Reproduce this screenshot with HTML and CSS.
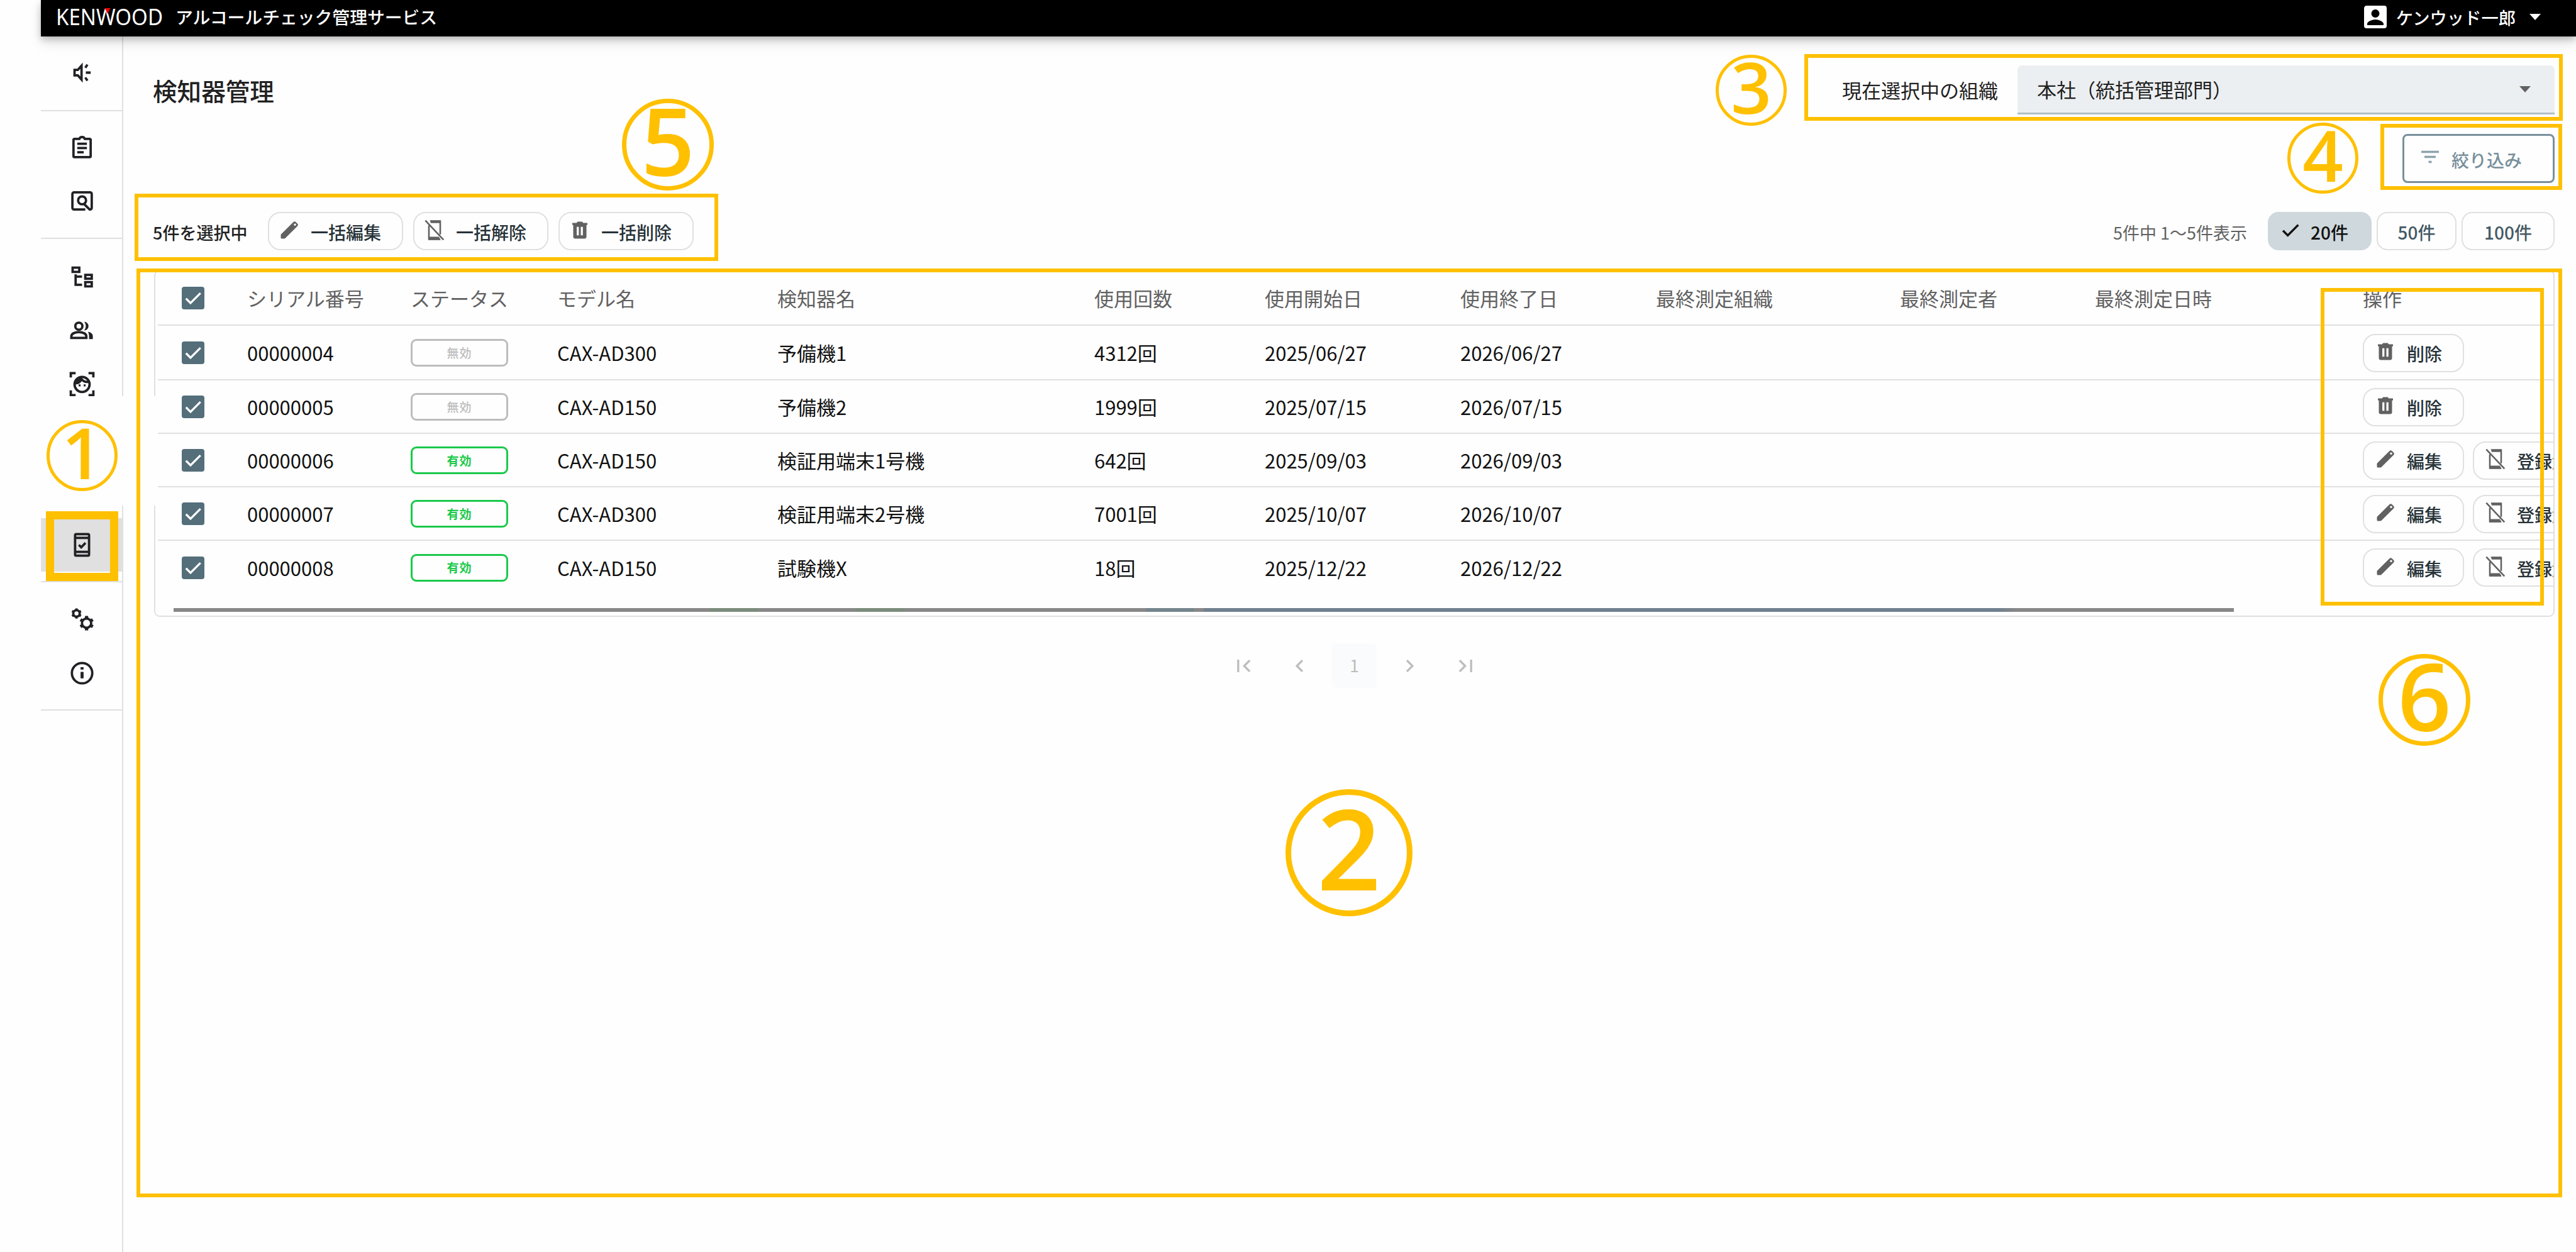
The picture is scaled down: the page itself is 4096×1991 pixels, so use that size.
FILE: index.html
```html
<!doctype html>
<html lang="ja">
<head>
<meta charset="utf-8">
<title>検知器管理</title>
<link rel="stylesheet" href="styles.css">
</head>

<body>
<svg class="defs">
	<symbol id="i-edit" viewBox="0 0 24 24"><path d="M20.700 5.200 18.800 3.300c-.7-.7-1.700-.7-2.400 0L3.300 16.400C3.100 16.600 3 16.900 3 17.200V20c0 .6.4 1 1 1h2.800c.3 0 .6-.1.800-.3L20.700 7.600c.7-.7.700-1.700 0-2.400zM18 7.400a1.200 1.200 0 1 1 0-2.400 1.200 1.200 0 0 1 0 2.400z"/></symbol>
	<symbol id="i-off" viewBox="0 0 24 24"><path d="M2.200 1.800 21.500 22.300M6 7v14.500h11.800M8 2.700h10V16.500" fill="none" stroke="currentColor" stroke-width="1.700"/><path d="M7 1.500h11.500v3H8zM5.500 19h11l2 3.500h-13z"/></symbol>
	<symbol id="i-del" viewBox="0 0 24 24"><path d="M4 4.300V6.500h1V19c0 1.200.8 2 2 2h10c1.200 0 2-.8 2-2V6.500h1V4.300h-4.500L14.500 3h-5L8.500 4.300zM8.700 8.500h2.200v9H8.700zM13 8.500h2.200v9H13z" fill-rule="evenodd"/></symbol>
	<symbol id="i-check" viewBox="0 0 24 24"><path d="M4.500 12.500 9.300 17.300 19.800 6.700" fill="none" stroke="currentColor" stroke-width="2.200"/></symbol>
</svg>

<div class="app">
	<header class="header">
		<svg class="logo" viewBox="0 0 170 30"><text x="0" y="27.500" textLength="170" lengthAdjust="spacingAndGlyphs">KENWOOD</text><path d="M77.500 1h9l-4.500 9z"/></svg>
		<span class="service">アルコールチェック管理サービス</span>
		<div class="user">
			<svg class="avatar" viewBox="0 0 24 24"><path fill-rule="evenodd" d="M5 3h14a2 2 0 0 1 2 2v14a2 2 0 0 1-2 2H5a2 2 0 0 1-2-2V5c0-1.100.9-2 2-2zM12 6a3.200 3.200 0 1 0 0 6.500A3.200 3.200 0 0 0 12 6zM5.500 18.500h13v-1c0-2-4.300-3.500-6.500-3.500s-6.500 1.500-6.500 3.500z"/></svg>
			<span>ケンウッド一郎</span>
			<i class="caret"></i>
		</div>
	</header>

	<div class="body">
		<nav class="side">
			<div class="group g1">
				<a class="item"><svg viewBox="0 0 24 24"><path d="M5 9.500h3l3.500-4v13L8 14.500H5z"/><path d="M15 7.500 17 4.500M15.500 12h4.500M15 16.500l2 3"/></svg></a>
			</div>
			<div class="group g2">
				<a class="item"><svg viewBox="0 0 24 24"><path d="M5 4h4.500c.3-1 1.300-1.800 2.500-1.800s2.200.8 2.500 1.800H19a1 1 0 0 1 1 1v15a1 1 0 0 1-1 1H5a1 1 0 0 1-1-1V5a1 1 0 0 1 1-1zM7.500 8.500h9M7.500 12.500h9M7.500 16.500h6"/></svg></a>
				<a class="item"><svg viewBox="0 0 24 24"><path d="M15 20H4.500a1.500 1.500 0 0 1-1.500-1.500v-13A1.500 1.500 0 0 1 4.500 4h15A1.500 1.500 0 0 1 21 5.500v13a1.500 1.500 0 0 1-1.500 1.500h-.5l-5-5"/><circle cx="12" cy="11.500" r="3.700"/></svg></a>
			</div>
			<div class="group g3">
				<a class="item"><svg viewBox="0 0 24 24"><path d="M3.200 3.300h6.200v4H3.200zM15 10h6v3.500h-6zM15 16.700h6v4h-6zM6 9.500v9.800h6M6 11.700h6"/></svg></a>
				<a class="item"><svg viewBox="0 0 24 24"><circle cx="9" cy="8" r="3.300"/><path d="M2 19v-1.500c0-2.300 3-4 7-4s7 1.700 7 4V19z"/><path class="fill" d="M14 4a4 4 0 1 1 0 8c2-2.500 2-5.500 0-8zM17.500 13.200c3 .6 4.500 2.200 4.500 4V20h-3.500v-2.500c0-1.700-.3-3-1-4.300z"/></svg></a>
				<a class="item"><svg viewBox="0 0 24 24"><circle cx="12" cy="12.500" r="7"/><path d="M5.500 11.500c3 0 5-1.500 6-4 1.500 2 4 3 7 2.500M1.500 6V2H6M18 2h4.500v4M1.500 18v4.500H6M18 22.500h4.500V18"/><path class="fill" d="M8.800 12.500h1.800v1.800H8.800zM13.500 12.500h1.800v1.800h-1.800zM6 9l5-3 1 2-5 3z"/></svg></a>
			</div>
			<div class="group g4">
				<a class="item on"><svg viewBox="0 0 24 24"><path d="M6.500 2h11a1 1 0 0 1 1 1v18a1 1 0 0 1-1 1h-11a1 1 0 0 1-1-1V3a1 1 0 0 1 1-1zM6 5.500h12M6 18.500h12M9 12l2.200 2.200 4-4"/></svg></a>
			</div>
			<div class="group g5">
				<a class="item"><svg viewBox="0 0 24 24"><circle cx="6.800" cy="6.200" r="3"/><path d="M6.800 1.500v2M6.800 9v2M2.700 3.900l1.700 1M9.200 7.500l1.700 1M2.700 8.500l1.700-1M9.200 4.900l1.700-1"/><circle cx="16.200" cy="15.200" r="4.300"/><path d="M16.200 8.500V11M16.200 19.500V22M10.500 11.900l2 1.200M20 17.300l2 1.200M10.500 18.500l2-1.200M20 13.100l2-1.200" stroke-width="3"/></svg></a>
				<a class="item"><svg viewBox="0 0 24 24"><circle cx="12" cy="12" r="9.500"/><path d="M12 10.800v6M12 6.500v2.200" stroke-width="2.800"/></svg></a>
			</div>
		</nav>

		<main class="main">
			<div class="top">
				<h1>検知器管理</h1>
				<div class="org">
					<label>現在選択中の組織</label>
					<div class="select"><span>本社（統括管理部門）</span><i class="caret"></i></div>
				</div>
			</div>
			<div class="filter">
				<button><svg viewBox="0 0 30 22"><path d="M1 2.500h28M6 10.500h18M12.500 18.500h5"/></svg>絞り込み</button>
			</div>
			<div class="tools">
				<div class="bulk">
					<span>5件を選択中</span>
					<a class="btn"><svg><use href="#i-edit"/></svg>一括編集</a>
					<a class="btn"><svg><use href="#i-off"/></svg>一括解除</a>
					<a class="btn"><svg><use href="#i-del"/></svg>一括削除</a>
				</div>
				<div class="size">
					<span>5件中 1～5件表示</span>
					<a class="chip s20 on"><svg><use href="#i-check"/></svg>20件</a>
					<a class="chip s50">50件</a>
					<a class="chip s100">100件</a>
				</div>
			</div>

			<div class="tablebox">
				<table>
					<colgroup><col class="c0"><col class="c1"><col class="c2"><col class="c3"><col class="c4"><col class="c5"><col class="c6"><col class="c7"><col class="c8"><col class="c9"><col class="c10"><col class="c11"></colgroup>
					<thead>
						<tr><th><i class="cb"><svg><use href="#i-check"/></svg></i></th><th>シリアル番号</th><th>ステータス</th><th>モデル名</th><th>検知器名</th><th>使用回数</th><th>使用開始日</th><th>使用終了日</th><th>最終測定組織</th><th>最終測定者</th><th>最終測定日時</th><th>操作</th></tr>
					</thead>
					<tbody>
						<tr><td><i class="cb"><svg><use href="#i-check"/></svg></i></td><td>00000004</td><td><em class="tag">無効</em></td><td>CAX-AD300</td><td>予備機1</td><td>4312回</td><td>2025/06/27</td><td>2026/06/27</td><td></td><td></td><td></td><td><div class="ops"><a class="btn"><svg><use href="#i-del"/></svg>削除</a></div></td></tr>
						<tr><td><i class="cb"><svg><use href="#i-check"/></svg></i></td><td>00000005</td><td><em class="tag">無効</em></td><td>CAX-AD150</td><td>予備機2</td><td>1999回</td><td>2025/07/15</td><td>2026/07/15</td><td></td><td></td><td></td><td><div class="ops"><a class="btn"><svg><use href="#i-del"/></svg>削除</a></div></td></tr>
						<tr><td><i class="cb"><svg><use href="#i-check"/></svg></i></td><td>00000006</td><td><em class="tag ok">有効</em></td><td>CAX-AD150</td><td>検証用端末1号機</td><td>642回</td><td>2025/09/03</td><td>2026/09/03</td><td></td><td></td><td></td><td><div class="ops"><a class="btn"><svg><use href="#i-edit"/></svg>編集</a><a class="btn"><svg><use href="#i-off"/></svg>登録解除</a></div></td></tr>
						<tr><td><i class="cb"><svg><use href="#i-check"/></svg></i></td><td>00000007</td><td><em class="tag ok">有効</em></td><td>CAX-AD300</td><td>検証用端末2号機</td><td>7001回</td><td>2025/10/07</td><td>2026/10/07</td><td></td><td></td><td></td><td><div class="ops"><a class="btn"><svg><use href="#i-edit"/></svg>編集</a><a class="btn"><svg><use href="#i-off"/></svg>登録解除</a></div></td></tr>
						<tr><td><i class="cb"><svg><use href="#i-check"/></svg></i></td><td>00000008</td><td><em class="tag ok">有効</em></td><td>CAX-AD150</td><td>試験機X</td><td>18回</td><td>2025/12/22</td><td>2026/12/22</td><td></td><td></td><td></td><td><div class="ops"><a class="btn"><svg><use href="#i-edit"/></svg>編集</a><a class="btn"><svg><use href="#i-off"/></svg>登録解除</a></div></td></tr>
					</tbody>
				</table>
				<p class="scroll"></p>
			</div>

			<div class="pager">
				<a><svg viewBox="0 0 24 24"><path d="M6.500 6v12M17.500 6.700 12.200 12l5.300 5.300"/></svg></a>
				<a><svg viewBox="0 0 24 24"><path d="M15 6.700 9.700 12l5.300 5.300"/></svg></a>
				<a class="on">1</a>
				<a><svg viewBox="0 0 24 24"><path d="M9 6.700 14.300 12 9 17.300"/></svg></a>
				<a><svg viewBox="0 0 24 24"><path d="M6.500 6.700 11.800 12l-5.300 5.300M17.500 6v12"/></svg></a>
			</div>
		</main>
	</div>
</div>

<!-- 説明用の枠と番号 -->
<div class="mask"></div>
<div class="frame f1"></div>
<div class="frame f2"></div>
<div class="frame f3"></div>
<div class="frame f4"></div>
<div class="frame f5"></div>
<div class="frame f6"></div>
<div class="num n1">1</div>
<div class="num n2">2</div>
<div class="num n3">3</div>
<div class="num n4">4</div>
<div class="num n5">5</div>
<div class="num n6">6</div>
</body>
</html>
```
FILE: styles.css
```css
*{margin:0;padding:0;box-sizing:border-box;}
body{width:4096px;height:1991px;overflow:hidden;position:relative;background:#fefefe;color:#212121;font:31px/1.2 'Noto Sans CJK JP',sans-serif;}
i,em{font-style:normal;}
.defs{display:none;}
.app{margin-left:65px;height:1991px;display:flex;flex-direction:column;}

/* header */
.header{height:58px;flex:none;background:#000;color:#fff;display:flex;align-items:center;padding:0 56px 4px 23px;box-shadow:0 4px 10px rgba(0,0,0,.2),0 10px 20px rgba(0,0,0,.12);position:relative;}
.logo{width:172px;height:30px;margin-top:-1px;overflow:visible;}
.logo text{font:36px 'Noto Sans',sans-serif;fill:#fff;}
.logo path{fill:#f00;}
.service{font-size:27.800px;font-weight:500;margin-left:19px;}
.user{margin-left:auto;display:flex;align-items:center;font-size:27.300px;font-weight:500;}
.avatar{width:48px;height:48px;fill:#fff;margin-right:9px;}
.caret{border:9px solid transparent;border-top:10px solid #fff;border-bottom:0;margin-left:22px;}

/* sidebar */
.body{flex:1;display:flex;}
.side{width:131px;border-right:2px solid #e0e0e0;}
.group{border-bottom:2px solid #e0e0e0;padding-top:15px;}
.item{height:85px;display:flex;align-items:center;justify-content:center;padding-left:2px;}
.item.on{background:#e0e0e0;}
.item svg{width:41px;height:41px;fill:none;stroke:#212125;stroke-width:2.200;overflow:visible;}
.item svg .fill{fill:#212125;stroke:none;}
.g1{height:119px;}
.g2{height:203px;}
.g3{height:270px;padding-top:18px;}
.g4{height:276px;padding-top:174px;}
.g5{height:204px;padding-top:17px;}

/* content */
.main{width:3900px;padding:46px 34px 0 49px;}
.top{height:78px;display:flex;justify-content:space-between;align-items:center;}
h1{font-size:38.600px;font-weight:500;margin-left:-2px;}
.org{display:flex;align-items:center;}
.select{width:854px;height:78px;margin-left:31px;padding:0 38px 0 31px;display:flex;align-items:center;justify-content:space-between;background:#eceff1;border-bottom:3px solid #b0bec5;border-radius:7px 7px 0 0;}
.select .caret{border-top-color:#616161;}
.filter{display:flex;justify-content:flex-end;margin-top:31px;}
.filter button{width:242px;height:78px;display:flex;align-items:center;padding:3px 0 0 26px;font:28px 'Noto Sans CJK JP',sans-serif;font-weight:500;color:#78909c;background:none;border:3px solid #78909c;border-radius:8px;}
.filter svg{width:30px;height:22px;margin:-8px 19px 0 0;fill:none;stroke:#8fa3ad;stroke-width:3.500;}
.tools{height:61px;margin-top:46px;display:flex;justify-content:space-between;align-items:center;font-size:27px;}
.bulk,.size,.ops{display:flex;align-items:center;}
.bulk{margin-left:-2px;}
.bulk>span{width:167px;font-weight:500;padding-top:5px;}
.bulk .btn{width:215px;margin:0 0 0 16px;}
.btn{height:61px;flex:none;display:flex;align-items:center;padding:4px 18px 0 14px;border:2px solid #e0e0e0;border-radius:20px;font-size:28px;font-weight:500;color:#263238;white-space:nowrap;}
.btn svg{width:36px;height:36px;margin:-8px 16px 0 0;fill:#616161;color:#616161;flex:none;}
.size>span{color:#616161;margin-right:33px;padding-top:5px;}
.chip{height:61px;display:flex;align-items:center;justify-content:center;padding-top:4px;border:2px solid #e0e0e0;border-radius:17px;font-size:28px;font-weight:500;color:#455a64;}
.chip.on{background:#cfd8dc;border-color:#cfd8dc;color:#111;}
.chip svg{width:38px;height:38px;margin:-7px 13px 0 0;}
.s20{width:165px;padding-right:20px;}
.s50{width:127px;margin:0 8px;}
.s100{width:148px;}

/* table */
.tablebox{height:552px;margin-top:31px;padding-left:4px;border:2px solid #e0e0e0;border-radius:9px;overflow:hidden;}
table{width:4150px;table-layout:fixed;border-collapse:collapse;}
th,td{text-align:left;border-bottom:2px solid #e0e0e0;white-space:nowrap;}
th{height:86px;font-weight:400;color:#616161;}
td{height:85px;color:#111;padding-top:1px;}
tbody tr:first-child td{height:87px;}
tbody tr:last-child td{border:0;}
td .btn{width:161px;padding-left:16px;margin-right:14px;}
td .btn+.btn{width:218px;}
.c0{width:142px;}
.c1{width:260px;}
.c2{width:233px;}
.c3{width:350px;}
.c4{width:504px;}
.c5{width:271px;}
.c6{width:311px;}
.c7{width:311px;}
.c8{width:388px;}
.c9{width:310px;}
.c10{width:426px;}
.cb{display:block;width:36px;height:36px;margin-left:38px;background:#546e7a;border-radius:4px;color:#fff;}
.cb svg{display:block;width:36px;height:36px;}
.tag{width:155px;height:44px;display:flex;align-items:center;justify-content:center;border:3px solid #bdbdbd;border-radius:9px;font-size:19px;letter-spacing:1px;color:#bdbdbd;font-weight:500;}
.tag.ok{border-color:#1bc94a;color:#1bc94a;font-weight:700;}
.scroll{width:3276px;height:6px;margin:23px 0 0 25px;background:linear-gradient(90deg,#888 26%,#7c8c7c 26%,#7c8c7c 28.400%,#888 28.400%,#888 33.100%,#7c8c7c 33.100%,#7c8c7c 35.500%,#888 35.500%,#888 47.200%,#74858d 47.200%,#74858d 49.500%,#888 49.500%,#888 50%,#70808f 50%,#70808f 88.500%,#888 89.500%);}

.pager{display:flex;justify-content:center;gap:17px;margin-top:42px;}
.pager a{width:71px;height:71px;display:flex;align-items:center;justify-content:center;font-size:27px;color:#bdbdbd;border-radius:7px;}
.pager .on{background:#fafbfd;}
.pager svg{width:40px;height:40px;fill:none;stroke:#bdbdbd;stroke-width:2;}

/* annotation */
.mask{position:absolute;left:65px;top:630px;width:184px;height:174px;background:#fefefe;}
.frame{position:absolute;border:6.500px solid #ffc000;}
.f1{left:73px;top:813px;width:115px;height:111px;border-width:13px;}
.f2{left:217px;top:427px;width:3857px;height:1477px;}
.f3{left:2869px;top:86px;width:1206px;height:106px;}
.f4{left:3785px;top:197px;width:289px;height:105px;}
.f5{left:214px;top:308px;width:928px;height:107px;}
.f6{left:3690px;top:458px;width:355px;height:505px;}
.num{position:absolute;display:flex;align-items:center;justify-content:center;width:113px;height:113px;padding-bottom:.1em;border:5px solid #ffc000;border-radius:50%;color:#ffc000;font:600 113px/1 'Open Sans',sans-serif;}
.n1{left:74px;top:668px;}
.n2{left:2044px;top:1255px;width:202px;height:202px;border-width:9px;font-size:178px;}
.n3{left:2728px;top:87px;}
.n4{left:3637px;top:195px;}
.n5{left:989px;top:157px;width:146px;height:146px;border-width:7px;font-size:149px;}
.n6{left:3782px;top:1040px;width:146px;height:146px;border-width:7px;font-size:149px;}
```
